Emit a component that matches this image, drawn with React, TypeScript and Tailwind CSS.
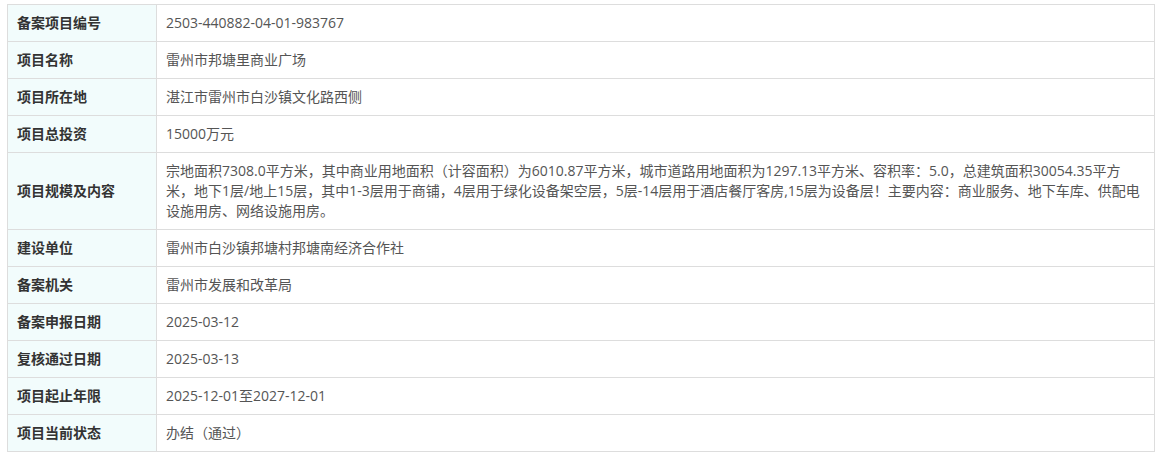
const rows: [string, string][] = [
  ["备案项目编号", "2503-440882-04-01-983767"],
  ["项目名称", "雷州市邦塘里商业广场"],
  ["项目所在地", "湛江市雷州市白沙镇文化路西侧"],
  ["项目总投资", "15000万元"],
  [
    "项目规模及内容",
    "宗地面积7308.0平方米，其中商业用地面积（计容面积）为6010.87平方米，城市道路用地面积为1297.13平方米、容积率：5.0，总建筑面积30054.35平方米，地下1层/地上15层，其中1-3层用于商铺，4层用于绿化设备架空层，5层-14层用于酒店餐厅客房,15层为设备层！主要内容：商业服务、地下车库、供配电设施用房、网络设施用房。",
  ],
  ["建设单位", "雷州市白沙镇邦塘村邦塘南经济合作社"],
  ["备案机关", "雷州市发展和改革局"],
  ["备案申报日期", "2025-03-12"],
  ["复核通过日期", "2025-03-13"],
  ["项目起止年限", "2025-12-01至2027-12-01"],
  ["项目当前状态", "办结（通过）"],
]

export default function App() {
  return (
    <div className="bg-white pt-[4px] pl-[7px] pr-[7px] h-[460px] font-['Open_Sans','Noto_Sans_CJK_SC',sans-serif] text-[14px]">
      <table className="w-full border-collapse">
        <tbody>
          {rows.map(([label, value]) => (
            <tr key={label}>
              <td className="w-[149px] border border-[#dddddd] bg-[#f2fcfc] px-[9px] py-[8px] leading-[20px] font-bold text-[#333333] align-middle">
                {label}
              </td>
              <td className="border border-[#dddddd] px-[9px] py-[8px] leading-[20px] text-[#555555] align-middle">
                {value}
              </td>
            </tr>
          ))}
        </tbody>
      </table>
    </div>
  )
}
